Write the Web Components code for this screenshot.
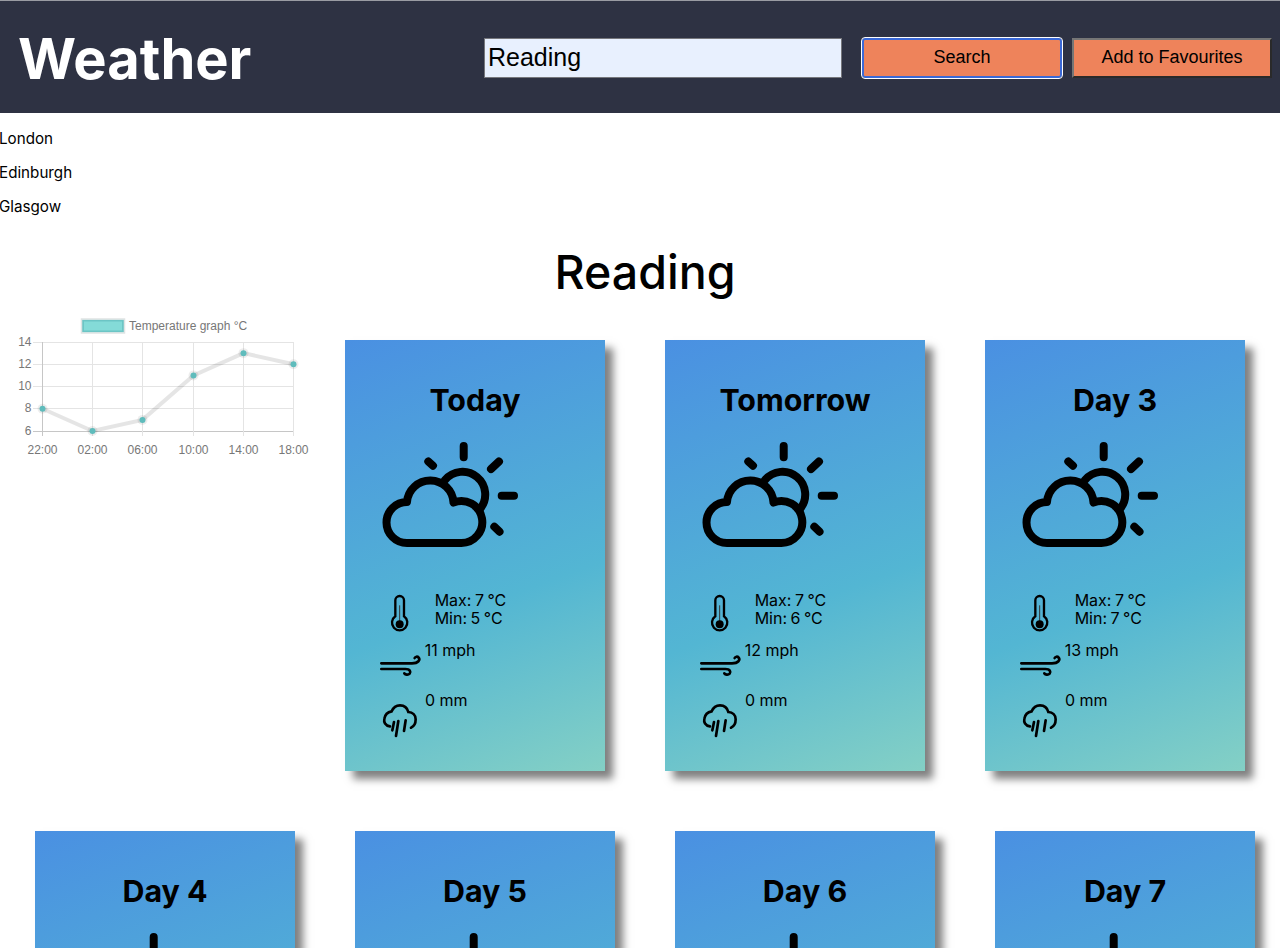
<!DOCTYPE html>
<html lang="en">
<head>
<meta charset="utf-8">
<title>Weather</title>
<style>
    html { overflow-x: hidden; }
    body { margin: 0; width: 1290px; background: #fff; color: #000; font-family: Inter, "Liberation Sans", sans-serif; font-size: 16px; }
</style>
</head>
<body>
<weather-header>Weather</weather-header>
<city-list>
    <city-item>London</city-item>
    <city-item>Edinburgh</city-item>
    <city-item>Glasgow</city-item>
</city-list>
<city-title>Reading</city-title>
<forecast-grid>
    <temp-chart></temp-chart>
    <day-card max="7" min="5" wind="11" rain="0">Today</day-card>
    <day-card max="7" min="6" wind="12" rain="0">Tomorrow</day-card>
    <day-card max="7" min="7" wind="13" rain="0">Day 3</day-card>
    <day-card max="7" min="6" wind="12" rain="0">Day 4</day-card>
    <day-card max="7" min="6" wind="12" rain="0">Day 5</day-card>
    <day-card max="7" min="6" wind="12" rain="0">Day 6</day-card>
    <day-card max="7" min="6" wind="12" rain="0">Day 7</day-card>
</forecast-grid>

<script>
class WeatherHeader extends HTMLElement {
    constructor() {
        super();
        this.attachShadow({ mode: 'open' });
    }

    connectedCallback() {
        this.shadowRoot.innerHTML = `
            <style>
                :host { display: flex; align-items: center; box-sizing: border-box; width: 1280px; height: 113px; padding: 2px 8px 0 18px; background: #2e3243; border-top: 1px solid #9a9ca3; }
                h1 { flex: 1; margin: 2px 0 0; color: #fff; font: 700 56px Inter, sans-serif; }
                input { box-sizing: border-box; width: 358px; height: 40px; margin: 0 20px 0 0; padding: 0 3px 2px; background: #e8f0fe; border: 1px solid #76777c; border-radius: 0; outline: 0; color: #000; font: 25px "Liberation Sans", sans-serif; }
                button { box-sizing: border-box; width: 200px; height: 40px; padding: 0 0 2px; background: #ee835b; border: 2px solid; border-color: #767676 #2a2a2a #2a2a2a #767676; color: #000; font: 18px "Liberation Sans", sans-serif; }
                .focused { margin-right: 10px; border: 2px solid #3b69d6; border-radius: 3px; outline: 1px solid #fff; }
            </style>
            <h1><slot></slot></h1>
            <input type="text" value="Reading">
            <button class="focused">Search</button>
            <button>Add to Favourites</button>
        `;
    }
}

class CityList extends HTMLElement {
    constructor() {
        super();
        this.attachShadow({ mode: 'open' });
    }

    connectedCallback() {
        this.shadowRoot.innerHTML = `
            <style>
                :host { display: block; padding-top: 9px; }
            </style>
            <slot></slot>
        `;
    }
}

class CityItem extends HTMLElement {
    constructor() {
        super();
        this.attachShadow({ mode: 'open' });
    }

    connectedCallback() {
        this.shadowRoot.innerHTML = `
            <style>
                :host { display: block; height: 34px; line-height: 34px; margin-left: -1px; font-size: 15.2px; }
            </style>
            <slot></slot>
        `;
    }
}

class CityTitle extends HTMLElement {
    constructor() {
        super();
        this.attachShadow({ mode: 'open' });
    }

    connectedCallback() {
        this.shadowRoot.innerHTML = `
            <style>
                :host { display: block; height: 58px; margin: 19px 0 9px; line-height: 58px; text-align: center; font-size: 46.5px; font-weight: 500; }
            </style>
            <slot></slot>
        `;
    }
}

class ForecastGrid extends HTMLElement {
    constructor() {
        super();
        this.attachShadow({ mode: 'open' });
    }

    connectedCallback() {
        this.shadowRoot.innerHTML = `
            <style>
                :host { display: flex; flex-wrap: wrap; justify-content: center; align-items: flex-start; }
            </style>
            <slot></slot>
        `;
    }
}

class TempChart extends HTMLElement {
    constructor() {
        super();
        this.attachShadow({ mode: 'open' });
    }

    connectedCallback() {
        const hours = ['22:00', '02:00', '06:00', '10:00', '14:00', '18:00'];
        const temps = [8, 6, 7, 11, 13, 12];
        const xs = [42.5, 92.5, 142.5, 193.5, 243.5, 293.5];
        const y = t => 431 - (t - 6) * 11.125;
        const ticks = [14, 12, 10, 8, 6];
        const line = temps.map((t, i) => `${xs[i]},${y(t)}`).join(' ');

        this.shadowRoot.innerHTML = `
            <style>
                :host { display: block; width: 300px; height: 150px; margin-top: 5px; }
                svg { display: block; }
                text { font: 12px "Liberation Sans", sans-serif; fill: #777; }
            </style>
            <svg width="300" height="150" viewBox="15 315 300 150">
                <rect x="83" y="320.5" width="40" height="11" fill="#84dbd8" stroke="#6cc5c5" stroke-width="2"/>
                <rect x="81.5" y="319" width="43" height="14" fill="none" stroke="#dfe3e3" stroke-width="1.5"/>
                <text x="129" y="330">Temperature graph °C</text>
                ${ticks.map(t => `
                    <line x1="33" x2="293.5" y1="${Math.floor(y(t)) + 0.5}" y2="${Math.floor(y(t)) + 0.5}" stroke="${t === 6 ? '#c6c6c6' : '#e4e4e4'}"/>
                    <text x="31.5" y="${y(t) + 3.5}" text-anchor="end">${t}</text>`).join('')}
                ${xs.map((x, i) => `
                    <line x1="${x}" x2="${x}" y1="342" y2="436" stroke="${i === 0 ? '#c6c6c6' : '#e4e4e4'}"/>
                    <text x="${x}" y="453.5" text-anchor="middle">${hours[i]}</text>`).join('')}
                <polyline points="${line}" fill="none" stroke="rgba(0,0,0,0.1)" stroke-width="4"/>
                ${temps.map((t, i) => `
                    <circle cx="${xs[i]}" cy="${y(t)}" r="5" fill="rgba(0,0,0,0.07)"/>
                    <circle cx="${xs[i]}" cy="${y(t)}" r="3" fill="#5fbcbc"/>`).join('')}
            </svg>
        `;
    }
}

class DayCard extends HTMLElement {
    constructor() {
        super();
        this.attachShadow({ mode: 'open' });
    }

    connectedCallback() {
        const max = this.getAttribute('max');
        const min = this.getAttribute('min');
        const wind = this.getAttribute('wind');
        const rain = this.getAttribute('rain');

        this.shadowRoot.innerHTML = `
            <style>
                :host { display: block; box-sizing: border-box; width: 260px; height: 431px; margin: 30px; padding: 40px 0 0 31px; background: linear-gradient(160deg, #4a90e2, #53b6d3 60%, #84d0c5); box-shadow: 8px 8px 8px rgba(0, 0, 0, 0.5); }
                h2 { margin: 0 0 0 -31px; height: 40px; line-height: 40px; text-align: center; font-size: 30.4px; font-weight: 700; }
                svg { display: block; flex: none; }
                .main { margin: 20px 0 41px 4px; }
                .row { display: flex; align-items: flex-start; height: 50px; line-height: 18px; }
                .temp svg { margin: 1px 22px 0 10px; }
                .temp div { word-spacing: -1px; }
                .wind svg { margin: 12px 1px 0 1px; }
                .rain svg { margin: 11px 5px 0 4px; }
            </style>
            <h2><slot></slot></h2>
            <svg class="main" width="140" height="110" viewBox="0 0 140 110" fill="none" stroke="#000" stroke-width="8" stroke-linecap="round" stroke-linejoin="round">
                <path d="M27 103H81A21 21 0 1 0 73.5 62.5A23.3 23.3 0 0 0 27 62A20.5 20.5 0 0 0 27 103Z"/>
                <path d="M65 40A22.7 22.7 0 0 1 100 69"/>
                <path d="M83.7 6V17.3M48.3 21.5L53 25.7M119 21.5L111 29M121.7 55.7H134M114.3 86.7L119.5 91.7"/>
            </svg>
            <div class="row temp">
                <svg width="26.67" height="43.33" viewBox="50 20 80 130" fill="none" stroke="#000" stroke-width="7">
                    <path d="M78 93V45A13 13 0 0 1 104 45V93A23 23 0 1 1 78 93Z"/>
                    <path d="M91 60V110" stroke="#333" stroke-width="3"/>
                    <circle cx="91" cy="117" r="12" fill="#000" stroke="none"/>
                </svg>
                <div>Max: ${max} °C<br>Min: ${min} °C</div>
            </div>
            <div class="row wind">
                <svg width="46.67" height="25" viewBox="20 205 140 75" fill="none" stroke="#000" stroke-width="8" stroke-linecap="round">
                    <path d="M33 236H125C145 236 150 225 145 219C141 214 135 216 133 220"/>
                    <path d="M33 253H105C120 253 122 262 118 267C113 272 105 270 102 266"/>
                </svg>
                <div>${wind} mph</div>
            </div>
            <div class="row rain">
                <svg width="40" height="36.67" viewBox="30 350 120 110" fill="none" stroke="#000" stroke-width="8" stroke-linecap="round">
                    <path d="M60 423C45 421 41 410 43 400C45 388 55 380 65 378C70 366 80 360 90 360C102 360 112 368 115 380C128 381 137 390 137 402C137 415 131 424 123 427"/>
                    <path d="M85 407L78 452M72 410L67 435M107 405L102 437"/>
                </svg>
                <div>${rain} mm</div>
            </div>
        `;
    }
}

customElements.define('weather-header', WeatherHeader);
customElements.define('city-list', CityList);
customElements.define('city-item', CityItem);
customElements.define('city-title', CityTitle);
customElements.define('forecast-grid', ForecastGrid);
customElements.define('temp-chart', TempChart);
customElements.define('day-card', DayCard);
</script>
</body>
</html>
